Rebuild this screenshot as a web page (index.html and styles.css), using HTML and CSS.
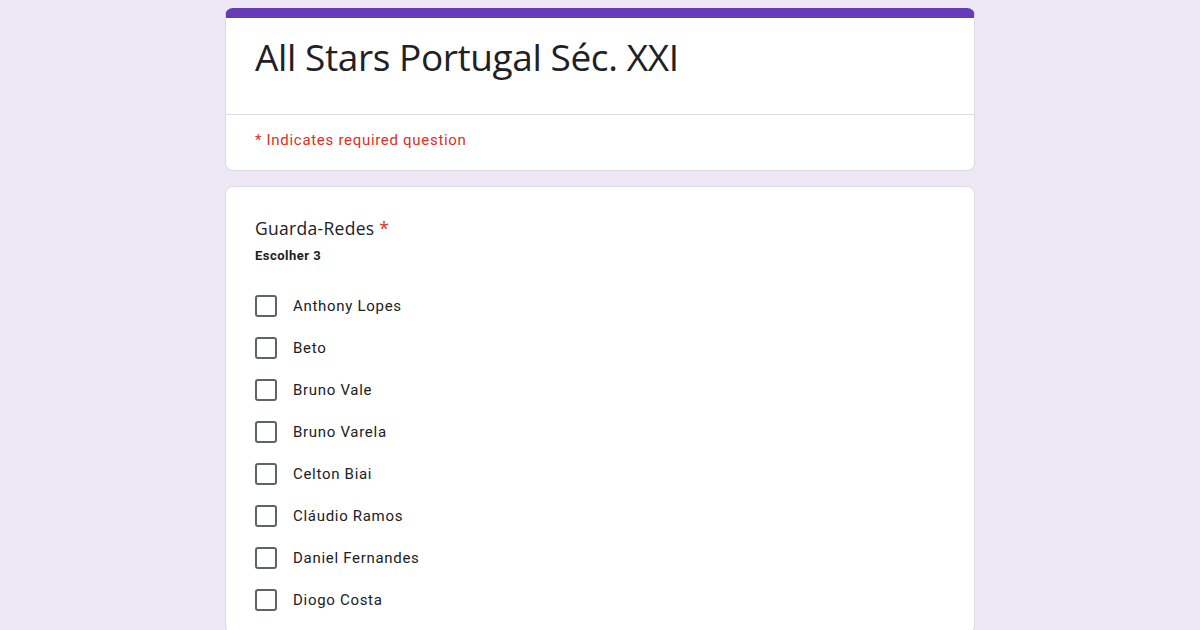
FILE: index.html
```html
<!DOCTYPE html>
<html lang="pt">
  <head>
    <meta charset="utf-8">
    <title>All Stars Portugal Séc. XXI</title>
    <link rel="stylesheet" href="styles.css">
  </head>
  <body>
    <main class="form">
      <section class="card header-card">
        <h1 class="form-title">All Stars Portugal Séc. XXI</h1>
        <div class="required-note">* Indicates required question</div>
      </section>

      <section class="card question">
        <div class="q-title">Guarda-Redes <span class="star">*</span></div>
        <div class="q-help">Escolher 3</div>
        <ul class="options">
          <li><span class="box"></span>Anthony Lopes</li>
          <li><span class="box"></span>Beto</li>
          <li><span class="box"></span>Bruno Vale</li>
          <li><span class="box"></span>Bruno Varela</li>
          <li><span class="box"></span>Celton Biai</li>
          <li><span class="box"></span>Cláudio Ramos</li>
          <li><span class="box"></span>Daniel Fernandes</li>
          <li><span class="box"></span>Diogo Costa</li>
        </ul>
      </section>
    </main>
  </body>
</html>
```

FILE: styles.css
```css
html, body {
  margin: 0;
  height: 100%;
  overflow: hidden;
}

body {
  background: #ede7f6;
  font-family: Roboto, Arial, sans-serif;
  color: #202124;
  padding-top: 8px;
  box-sizing: border-box;
}

.form {
  width: 750px;
  margin: 0 auto;
  display: flex;
  flex-direction: column;
  gap: 15px;
}

.card {
  background: #ffffff;
  border: 1px solid #dadce0;
  border-radius: 8px;
}

.header-card {
  border-top: 10px solid #673ab7;
}

.form-title {
  margin: 0;
  padding: 17px 29px 35px;
  font-family: "Open Sans", Arial, sans-serif;
  font-weight: 400;
  font-size: 37px;
  line-height: 44px;
  letter-spacing: -0.4px;
  color: #202124;
  border-bottom: 1px solid #dadce0;
}

.required-note {
  padding: 15px 29px 20px;
  font-size: 15px;
  line-height: 20px;
  letter-spacing: 0.7px;
  color: #d93025;
}

.question {
  padding: 29px 29px 12px;
}

.q-title {
  font-family: "Open Sans", Arial, sans-serif;
  font-size: 17.5px;
  line-height: 24px;
  letter-spacing: 0.3px;
}

.star {
  color: #d93025;
}

.q-help {
  margin-top: 8px;
  font-size: 13px;
  line-height: 16px;
  font-weight: 700;
  letter-spacing: 0.5px;
}

.options {
  list-style: none;
  margin: 21px 0 0;
  padding: 0;
}

.options li {
  height: 42px;
  display: flex;
  align-items: center;
  font-size: 15px;
  letter-spacing: 0.7px;
}

.box {
  width: 18px;
  height: 18px;
  border: 2px solid #5f6368;
  border-radius: 3px;
  margin-right: 16px;
  flex: none;
}
```
